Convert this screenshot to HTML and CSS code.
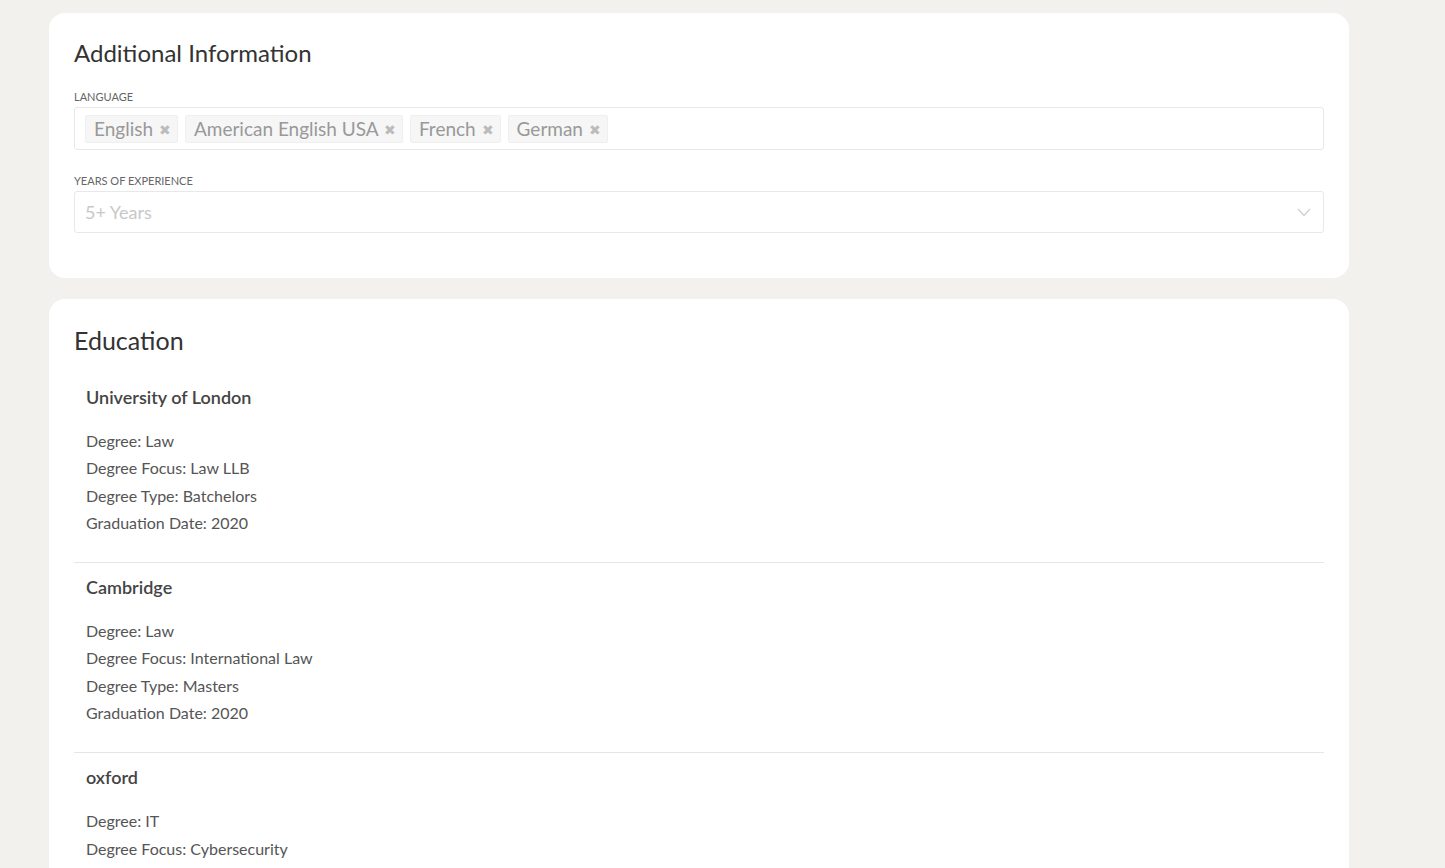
FILE: index.html
```html
<!DOCTYPE html>
<html lang="en">
<head>
    <meta charset="UTF-8">
    <meta name="viewport" content="width=device-width, initial-scale=1.0">
    <title>Profile</title>
    <link rel="stylesheet" href="styles.css">
</head>
<body>

    <div class="page">
        <!-- Additional information card -->
        <section class="card">
            <h2 class="card-title">Additional Information</h2>

            <div class="field">
                <label class="field-label">Language</label>
                <div class="tag-input">
                    <span class="tag">English <span class="tag-remove">&#x2716;</span></span>
                    <span class="tag">American English USA <span class="tag-remove">&#x2716;</span></span>
                    <span class="tag">French <span class="tag-remove">&#x2716;</span></span>
                    <span class="tag">German <span class="tag-remove">&#x2716;</span></span>
                </div>
            </div>

            <div class="field">
                <label class="field-label">Years of Experience</label>
                <div class="select">
                    <span class="select-value">5+ Years</span>
                    <svg class="select-arrow" width="14" height="9" viewBox="0 0 14 9">
                        <path d="M1 1 L7 7.5 L13 1" fill="none" stroke="#cfcfcf" stroke-width="1.3"/>
                    </svg>
                </div>
            </div>
        </section>

        <!-- Education card -->
        <section class="card">
            <h2 class="card-title edu-title">Education</h2>

            <div class="edu-item">
                <h3>University of London</h3>
                <p>Degree: Law</p>
                <p>Degree Focus: Law LLB</p>
                <p>Degree Type: Batchelors</p>
                <p>Graduation Date: 2020</p>
            </div>

            <div class="edu-item">
                <h3>Cambridge</h3>
                <p>Degree: Law</p>
                <p>Degree Focus: International Law</p>
                <p>Degree Type: Masters</p>
                <p>Graduation Date: 2020</p>
            </div>

            <div class="edu-item">
                <h3>oxford</h3>
                <p>Degree: IT</p>
                <p>Degree Focus: Cybersecurity</p>
                <p>Degree Type: Masters</p>
                <p>Graduation Date: 2021</p>
            </div>
        </section>
    </div>

</body>
</html>
```

FILE: styles.css
```css
body {
    font-family: "Source Sans Pro", Lato, "Noto Sans", sans-serif;
    margin: 0;
    padding: 0;
    background-color: #f2f1ed;
    color: #444;
}

.page {
    width: 1300px;
    margin-left: 49px;
    padding-top: 13px;
    display: flex;
    flex-direction: column;
    gap: 21px;
}

.card {
    background-color: #fff;
    border-radius: 16px;
    padding: 24px 25px 45px;
}

.card-title {
    font-size: 24px;
    font-weight: 400;
    color: #333;
    margin: 0 0 21px;
    line-height: 32px;
}

.field {
    margin-bottom: 24px;
}

.field:last-child {
    margin-bottom: 0;
}

.field-label {
    display: block;
    font-size: 11px;
    text-transform: uppercase;
    color: #666;
    line-height: 14px;
    margin-bottom: 3px;
}

.tag-input {
    border: 1px solid #e8e8e8;
    border-radius: 3px;
    height: 41px;
    padding: 0 10px;
    display: flex;
    align-items: center;
    gap: 7px;
}

.tag {
    background-color: #f6f6f6;
    border: 1px solid #efefef;
    border-radius: 2px;
    color: #999;
    font-size: 19px;
    line-height: 25px;
    padding: 0 6px 0 8px;
}

.tag-remove {
    font-size: 14px;
    color: #bbb;
    margin-left: 1px;
    vertical-align: 1px;
}

.select {
    border: 1px solid #e8e8e8;
    border-radius: 3px;
    height: 40px;
    padding: 0 10px;
    display: flex;
    align-items: center;
    justify-content: space-between;
}

.select-value {
    color: #c8c8c8;
    font-size: 18px;
}

.select-arrow {
    margin-right: 2px;
}

.edu-title {
    font-size: 25px;
    margin-bottom: 17px;
}

.card:last-child {
    padding-top: 25px;
}

.edu-item {
    padding: 12px 12px 26px;
    border-bottom: 1px solid #e6e6e6;
}

.edu-item:last-child {
    border-bottom: none;
}

.edu-item h3 {
    font-size: 18px;
    font-weight: 600;
    color: #444;
    margin: 0 0 18px;
    line-height: 24px;
}

.edu-item p {
    font-size: 16px;
    margin: 0;
    line-height: 27.3px;
    color: #555;
}
```
